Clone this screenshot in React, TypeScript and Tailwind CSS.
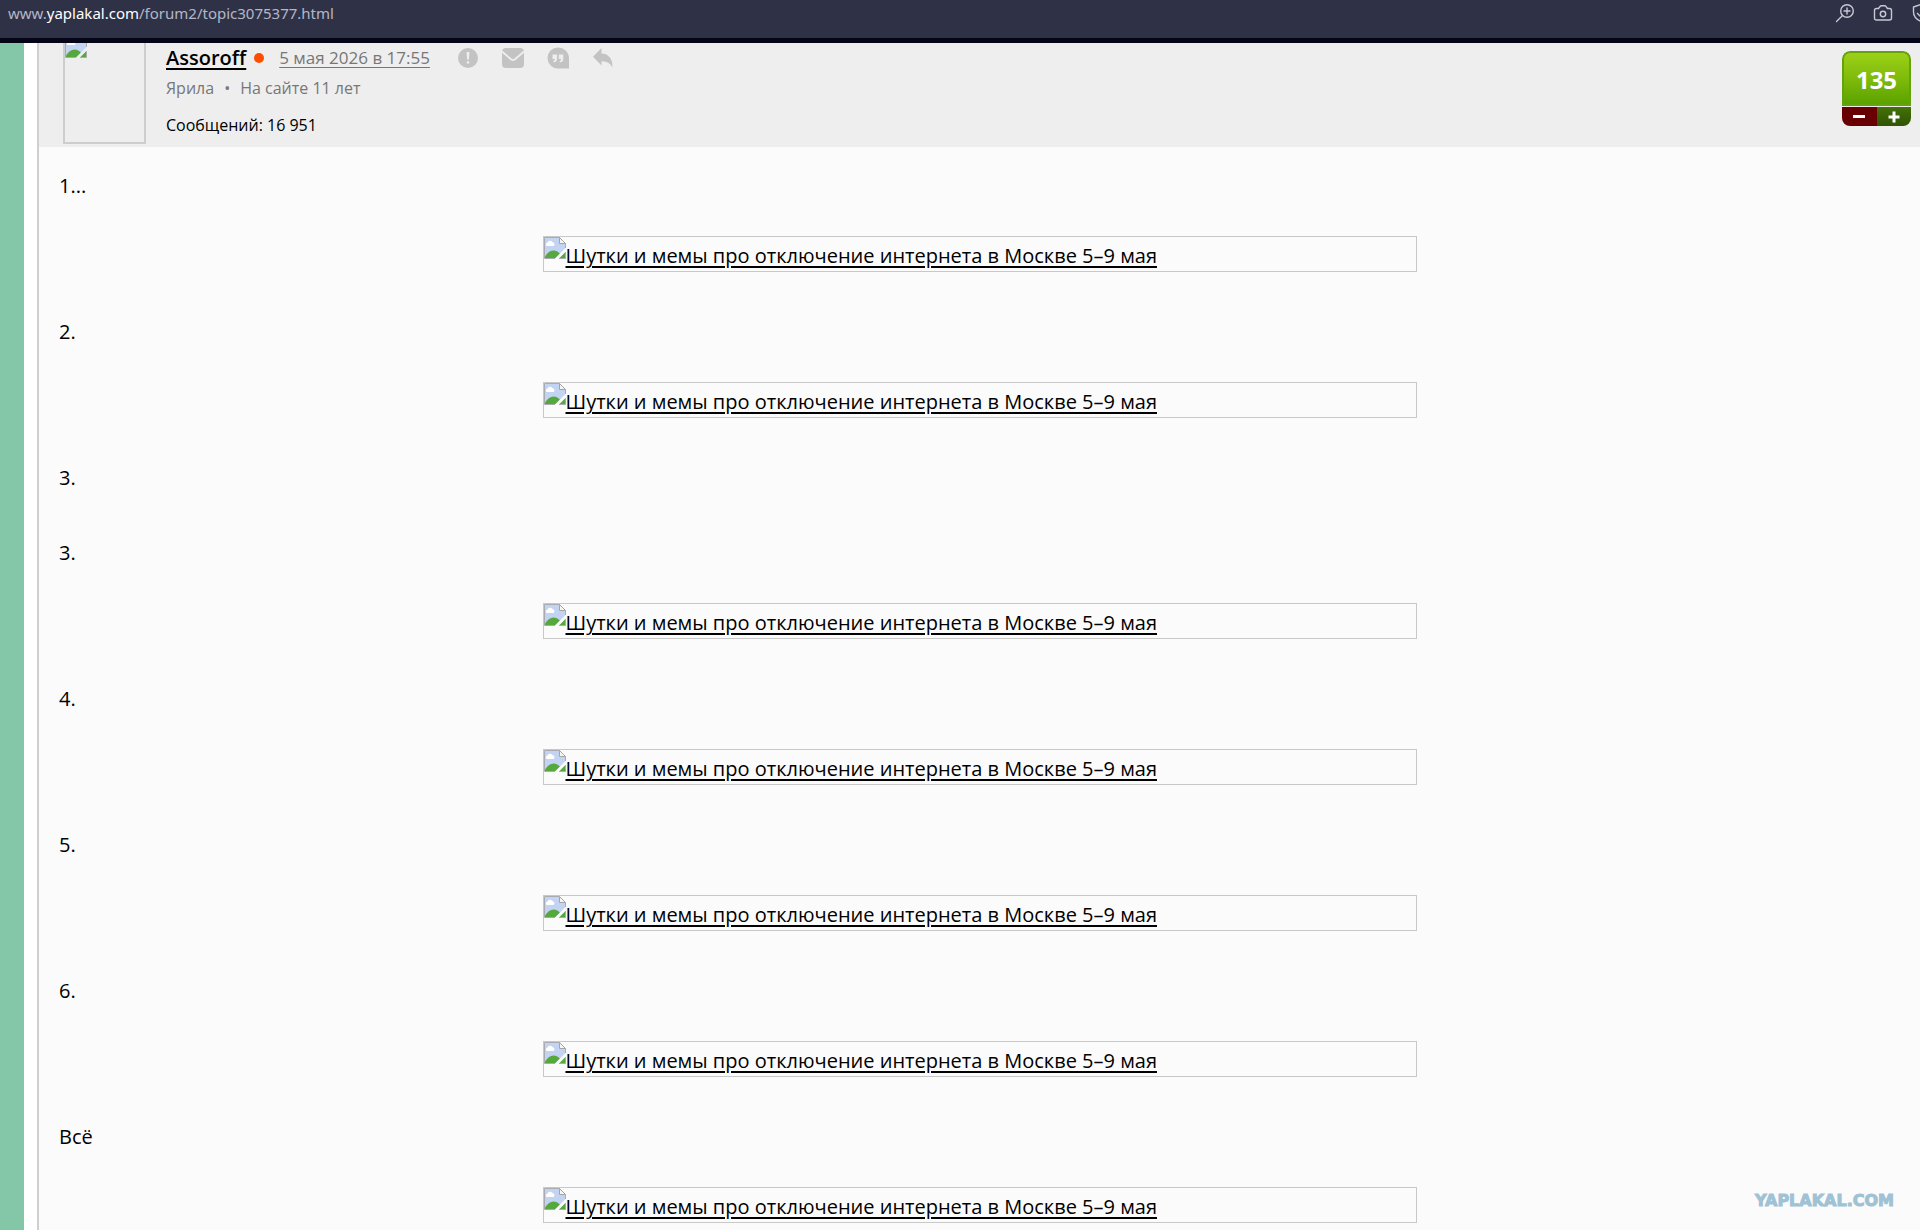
import React from "react";

const ALT = "Шутки и мемы про отключение интернета в Москве 5–9 мая";

const entries: { label: string; picture: boolean }[] = [
  { label: "1...", picture: true },
  { label: "2.", picture: true },
  { label: "3.", picture: false },
  { label: "3.", picture: true },
  { label: "4.", picture: true },
  { label: "5.", picture: true },
  { label: "6.", picture: true },
  { label: "Всё", picture: true },
];

function BrokenImage({ className = "" }: { className?: string }) {
  return (
    <svg viewBox="0 0 22 22" className={`size-[22px] shrink-0 ${className}`} aria-hidden="true">
      <path d="M0.5 0.5H15.5L21.5 6.5V11L11 21.5H0.5Z" fill="#c3d4f3" />
      <path d="M2.500 9a2 2 0 0 1 1-3.400 2.800 2.800 0 0 1 5.200-.3A2 2 0 0 1 9.500 9Z" fill="#fff" />
      <path d="M1 21.500V19.500C3.500 15.500 6.500 13.500 9.500 13.500C12.500 13.500 14.500 15 15.800 16.500L10.800 21.500Z" fill="#55a83c" />
      <path d="M21.500 15V21.500H15Z" fill="#55a83c" />
      <path d="M15.500 .5V6.500H21.500Z" fill="#f4f4f4" stroke="#a5a5a5" />
      <path d="M10.800 21.500H.5V.5H15.500M21.500 6.500V11M21.500 15V21.500H15" fill="none" stroke="#a9abb0" />
    </svg>
  );
}

function BrowserBar() {
  return (
    <header className="flex h-[43px] items-start justify-between overflow-hidden border-b-5 border-[#040617] bg-[#2f3247] pl-2">
      <a href="#url" className="font-['Noto_Sans',sans-serif] text-[15px] leading-[26px] text-[#b4b7c6]">
        www.<span className="text-white">yaplakal.com</span>/forum2/topic3075377.html
      </a>
      <div className="-mr-[11px] flex shrink-0 gap-[18px] pt-[3px] text-[#c6c8d2]">
        <button type="button" aria-label="Масштаб">
          <svg viewBox="0 0 20 20" className="size-5" fill="none" stroke="currentColor" strokeWidth="1.400" strokeLinecap="round">
            <circle cx="12" cy="8" r="6.300" />
            <path d="M7.500 12.500L1.500 18.500M12 5v6M9 8h6" />
          </svg>
        </button>
        <button type="button" aria-label="Снимок">
          <svg viewBox="0 0 20 20" className="size-5" fill="none" stroke="currentColor" strokeWidth="1.400" strokeLinejoin="round">
            <path d="M3.500 5.500H5.500L7.300 3.200Q7.600 2.800 8.200 2.800H11.800Q12.400 2.800 12.700 3.200L14.500 5.500H16.500Q18.500 5.500 18.500 7.500V15Q18.500 17 16.500 17H3.500Q1.500 17 1.500 15V7.500Q1.500 5.500 3.500 5.500Z" />
            <circle cx="10" cy="11" r="2.700" />
          </svg>
        </button>
        <button type="button" aria-label="Защита">
          <svg viewBox="0 0 20 20" className="size-5" fill="none" stroke="currentColor" strokeWidth="1.400" strokeLinejoin="round">
            <path d="M10 1.500L17.500 4V9Q17.500 15 10 18.500Q2.500 15 2.500 9V4Z" />
            <path d="M6 10l3 3 5-6" />
          </svg>
        </button>
      </div>
    </header>
  );
}

function PostActions() {
  return (
    <div className="flex items-center gap-[23px] text-[#c3c3c3]">
      <button type="button" aria-label="Пожаловаться">
        <svg viewBox="0 0 22 22" className="size-[22px]">
          <circle cx="11" cy="11" r="10" fill="currentColor" />
          <path d="M9.600 5h2.800l-.4 7.500h-2zM9.800 14.200h2.400v2.300h-2.400z" fill="#eee" />
        </svg>
      </button>
      <button type="button" aria-label="Написать">
        <svg viewBox="0 0 22 22" className="size-[22px]">
          <rect x="0" y="1" width="22" height="20" rx="4" fill="currentColor" />
          <path d="M0 4.500L9 12.300Q11 14 13 12.300L22 4.500" fill="none" stroke="#eee" strokeWidth="1.800" />
        </svg>
      </button>
      <button type="button" aria-label="Цитировать">
        <svg viewBox="0 0 22 22" className="size-[22px]">
          <path d="M11 0.500A10.500 10.500 0 0 0 11 21.500H22V11A10.700 10.700 0 0 0 11 .5Z" fill="currentColor" />
          <path d="M5.500 7.500H10V12Q10 15 6.500 15.500V13.800Q8 13.500 8 12H5.500ZM11.800 7.500H16.300V12Q16.300 15 12.800 15.500V13.800Q14.300 13.500 14.300 12H11.800Z" fill="#eee" />
        </svg>
      </button>
      <button type="button" aria-label="Ответить">
        <svg viewBox="0 0 22 22" className="size-[22px]">
          <path d="M9.500 1V6.500Q20.500 7 20.500 20.500Q17 13.800 9.500 14.200V18.500L1 9.800Z" fill="currentColor" />
        </svg>
      </button>
    </div>
  );
}

function Rating() {
  return (
    <div className="mt-2 w-[69px] shrink-0 overflow-hidden rounded-lg">
      <div className="flex h-[55px] items-center justify-center rounded-t-lg border-2 border-[#64a30c] bg-linear-to-b from-[#9bd016] via-[#7fbb0c] to-[#5ba200] pt-0.5 font-['Noto_Sans',sans-serif] text-[24px] font-bold text-white">
        135
      </div>
      <div className="mt-px grid h-[19px] grid-cols-2">
        <button type="button" aria-label="Минус" className="flex items-center justify-center bg-[#680003]">
          <span className="h-[3px] w-3 bg-white" />
        </button>
        <button type="button" aria-label="Плюс" className="flex items-center justify-center bg-linear-to-b from-[#447109] to-[#305304]">
          <svg viewBox="0 0 12 12" className="size-3">
            <path d="M6 0.500v11M.5 6h11" stroke="#fff" strokeWidth="3" />
          </svg>
        </button>
      </div>
    </div>
  );
}

function PostHeader() {
  return (
    <div className="flex h-[104px] items-start justify-between bg-[#eee] pr-[9px] pl-6">
      <div className="flex gap-5">
        <a href="#profile" aria-label="Assoroff" className="block h-[101px] w-[83px] shrink-0 overflow-hidden border-2 border-t-0 border-[#cdcdcd]">
          <BrokenImage className="-mt-[7px]" />
        </a>
        <div>
          <div className="flex h-[30px] items-center">
            <a href="#user" className="text-[20px] font-semibold text-black underline decoration-2 underline-offset-3">
              Assoroff
            </a>
            <span className="ml-2 size-[10px] rounded-full bg-[#ff4d00]" />
            <a href="#post" className="mr-[27px] ml-[15px] text-[17px] text-[#777] underline underline-offset-3">
              5 мая 2026 в 17:55
            </a>
            <PostActions />
          </div>
          <p className="mt-0.5 flex h-[26px] items-center gap-[10px] text-[16px] text-[#777]">
            <span>Ярила</span>
            <span>•</span>
            <span>На сайте 11 лет</span>
          </p>
          <p className="mt-3 text-[16px] leading-6 text-black">Сообщений: 16 951</p>
        </div>
      </div>
      <Rating />
    </div>
  );
}

export default function App() {
  return (
    <div className="relative flex h-screen flex-col overflow-hidden bg-white font-['Open_Sans','Noto_Sans',sans-serif]">
      <BrowserBar />
      <div className="flex min-h-0 flex-1">
        <div className="w-6 shrink-0 bg-[#84c6a8]" />
        <main className="ml-[13px] min-w-0 flex-1 border-l-2 border-[#cfcfcf] bg-[#fbfbfb]">
          <PostHeader />
          <article className="flex flex-col gap-[45px] pt-6 text-[20px] leading-[30px] text-black">
            {entries.map((entry, i) => (
              <section key={i} className="flex flex-col gap-[35px]">
                <p className="pl-5">{entry.label}</p>
                {entry.picture && (
                  <a
                    href="#picture"
                    className="mx-auto flex h-9 w-full max-w-[874px] items-start border border-[#c8c8c8] whitespace-nowrap"
                  >
                    <BrokenImage />
                    <span className="pt-1 underline decoration-2 underline-offset-3">{ALT}</span>
                  </a>
                )}
              </section>
            ))}
          </article>
        </main>
      </div>
      <div className="absolute right-[26px] bottom-[19px] font-['DejaVu_Sans',sans-serif] text-[16px] leading-5 font-bold text-[#9fc2d5] [-webkit-text-stroke:1px_#9fc2d5]">
        YAPLAKAL.COM
      </div>
    </div>
  );
}
